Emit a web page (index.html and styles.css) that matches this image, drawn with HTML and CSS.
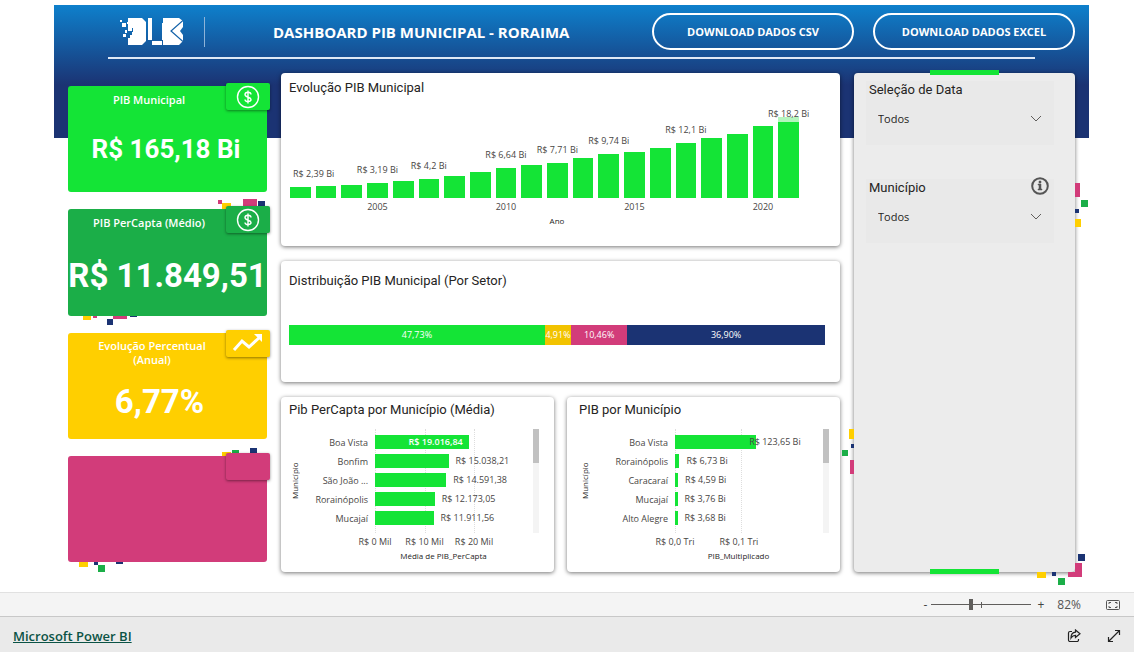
FILE: index.html
```html
<!DOCTYPE html>
<html lang="pt-BR">
<head>
<meta charset="utf-8">
<meta name="viewport" content="width=device-width, initial-scale=1">
<title>Dashboard PIB Municipal - Roraima</title>
<link rel="stylesheet" href="styles.css">
</head>
<body>
<main class="report">
  <header class="header">
    <div class="header-row">
      <svg class="logo" viewBox="0 0 63 29" role="img" aria-label="DLB">
        <g fill="#fff">
          <path d="M8 1h14l4 4v19l-4 4H8v-7h2v-3h2v-3h1v-4H8z"/>
          <path d="M28 1h4v22h-4zM32 24h10v4H32z"/>
          <path d="M43 1h16l4 3v6l-3 4 3 4v6l-4 4H43v-5h-1V6h1z"/>
          <path d="M0 3h2v2H0zM2 6h4v4H2zM8 11h4v3H8zM5 13h2v3H5zM3 17h3v3H3zM7 5h2v2H7z"/>
        </g>
        <path d="M63 3.500 51 14l12 10.500" fill="none" stroke="#1261a8" stroke-width="1.200"/>
      </svg>
      <span class="divider"></span>
      <h1 class="title">DASHBOARD PIB MUNICIPAL - RORAIMA</h1>
      <button class="download" type="button">DOWNLOAD DADOS CSV</button>
      <button class="download" type="button">DOWNLOAD DADOS EXCEL</button>
    </div>
    <hr class="rule">
  </header>

  <div class="layout">
    <section class="kpis">
      <article class="kpi kpi-lime">
        <h2 class="kpi-title">PIB Municipal</h2>
        <p class="kpi-value">R$ 165,18 Bi</p>
        <span class="tab"><svg class="coin" viewBox="0 0 24 24"><circle cx="12" cy="12" r="10.500"/><path d="M12 5.500v13M15 9.500C15 6.500 9 6.500 9 9.500S15 12 15 14.500 9 17.500 9 14.500"/></svg></span>
      </article>
      <article class="kpi kpi-green">
        <svg class="bits bits-top" width="60" height="10" viewBox="0 0 60 10"><path fill="#d23c7a" d="M11 1h4v4h-4zM36 0h14v8H36z"/><path fill="#ffcf00" d="M15 4h9v6h-9z"/><path fill="#1b3373" d="M51 2h7v6h-7z"/></svg>
        <svg class="bits bits-bottom" width="80" height="10" viewBox="0 0 80 10"><path fill="#ffcf00" d="M15 0h8v4h-8z"/><path fill="#d23c7a" d="M25 0h4v2h-4zM45 0h14v3H45z"/><path fill="#1b3373" d="M39 3h6v6h-6zM62 0h7v1h-7z"/></svg>
        <h2 class="kpi-title">PIB PerCapta (Médio)</h2>
        <p class="kpi-value kpi-large">R$ 11.849,51</p>
        <span class="tab"><svg class="coin" viewBox="0 0 24 24"><circle cx="12" cy="12" r="10.500"/><path d="M12 5.500v13M15 9.500C15 6.500 9 6.500 9 9.500S15 12 15 14.500 9 17.500 9 14.500"/></svg></span>
      </article>
      <article class="kpi kpi-yellow">
        <h2 class="kpi-title">Evolução Percentual<br>(Anual)</h2>
        <p class="kpi-value kpi-large">6,77%</p>
        <span class="tab"><svg class="trend" viewBox="0 0 32 20"><path d="M2 17 10 8l7 6L28 4" fill="none" stroke="#fff" stroke-width="3"/><path d="M22 1h8v8z" fill="#fff"/></svg></span>
      </article>
      <article class="kpi kpi-pink">
        <svg class="bits bits-top" width="60" height="10" viewBox="0 0 60 10"><path fill="#ffcf00" d="M15 6h9v4h-9z"/><path fill="#1bae48" d="M25 4h7v4h-7z"/><path fill="#1b3373" d="M43 2h7v6h-7z"/></svg>
        <svg class="bits bits-bottom" width="80" height="10" viewBox="0 0 80 10"><path fill="#ffcf00" d="M11 0h9v5h-9z"/><path fill="#1bae48" d="M30 3h7v7h-7z"/><path fill="#1b3373" d="M26 0h4v3h-4zM48 0h7v2h-7z"/></svg>
        <span class="tab"></span>
      </article>
    </section>

    <section class="charts">
      <article class="card">
        <h2 class="card-title">Evolução PIB Municipal</h2>
        <div class="columns">
          <div class="col col-first"><span class="col-label">R$ 2,39 Bi</span><i class="col-bar" style="height:11px"></i></div>
          <div class="col"><i class="col-bar" style="height:12px"></i></div>
          <div class="col"><i class="col-bar" style="height:13px"></i></div>
          <div class="col"><span class="col-label">R$ 3,19 Bi</span><i class="col-bar" style="height:15px"></i></div>
          <div class="col"><i class="col-bar" style="height:17px"></i></div>
          <div class="col"><span class="col-label">R$ 4,2 Bi</span><i class="col-bar" style="height:19px"></i></div>
          <div class="col"><i class="col-bar" style="height:22px"></i></div>
          <div class="col"><i class="col-bar" style="height:26px"></i></div>
          <div class="col"><span class="col-label">R$ 6,64 Bi</span><i class="col-bar" style="height:30px"></i></div>
          <div class="col"><i class="col-bar" style="height:33px"></i></div>
          <div class="col"><span class="col-label">R$ 7,71 Bi</span><i class="col-bar" style="height:35px"></i></div>
          <div class="col"><i class="col-bar" style="height:40px"></i></div>
          <div class="col"><span class="col-label">R$ 9,74 Bi</span><i class="col-bar" style="height:44px"></i></div>
          <div class="col"><i class="col-bar" style="height:46px"></i></div>
          <div class="col"><i class="col-bar" style="height:50px"></i></div>
          <div class="col"><span class="col-label">R$ 12,1 Bi</span><i class="col-bar" style="height:55px"></i></div>
          <div class="col"><i class="col-bar" style="height:60px"></i></div>
          <div class="col"><i class="col-bar" style="height:64px"></i></div>
          <div class="col"><i class="col-bar" style="height:72px"></i></div>
          <div class="col col-last"><span class="col-label">R$ 18,2 Bi</span><i class="col-bar" style="height:81px"></i></div>
        </div>
        <div class="years">
          <span class="year y2005">2005</span><span class="year y2010">2010</span><span class="year y2015">2015</span><span class="year y2020">2020</span>
        </div>
        <p class="axis-title year-title">Ano</p>
      </article>

      <article class="card card-sectors">
        <h2 class="card-title">Distribuição PIB Municipal (Por Setor)</h2>
        <div class="stack">
          <span class="seg seg-lime" style="width:47.73%">47,73%</span>
          <span class="seg seg-yellow" style="width:4.91%">4,91%</span>
          <span class="seg seg-pink" style="width:10.46%">10,46%</span>
          <span class="seg seg-navy" style="width:36.9%">36,90%</span>
        </div>
      </article>

      <div class="pair">
        <article class="card">
          <h2 class="card-title">Pib PerCapta por Município (Média)</h2>
          <div class="hchart">
            <span class="side-title">Município</span>
            <div class="rows">
              <div class="gridlines"><i style="left:0%"></i><i style="left:33%"></i><i style="left:66%"></i></div>
              <span class="name">Boa Vista</span><div class="track"><b class="bar bar-in" style="width:62.5%">R$ 19.016,84</b></div>
              <span class="name">Bonfim</span><div class="track"><b class="bar" style="width:49%"></b><span class="value">R$ 15.038,21</span></div>
              <span class="name">São João ...</span><div class="track"><b class="bar" style="width:47.5%"></b><span class="value">R$ 14.591,38</span></div>
              <span class="name">Rorainópolis</span><div class="track"><b class="bar" style="width:39.8%"></b><span class="value">R$ 12.173,05</span></div>
              <span class="name">Mucajaí</span><div class="track"><b class="bar" style="width:39%"></b><span class="value">R$ 11.911,56</span></div>
            </div>
            <span class="scroll"></span>
          </div>
          <div class="ticks"><span style="left:0%">R$ 0 Mil</span><span style="left:33%">R$ 10 Mil</span><span style="left:66%">R$ 20 Mil</span></div>
          <p class="axis-title bar-title">Média de PIB_PerCapta</p>
        </article>

        <article class="card card-total">
          <h2 class="card-title">PIB por Município</h2>
          <div class="hchart">
            <span class="side-title">Município</span>
            <div class="rows">
              <div class="gridlines"><i style="left:0%"></i><i style="left:47%"></i></div>
              <span class="name">Boa Vista</span><div class="track"><b class="bar" style="width:58%"></b><span class="value value-over">R$ 123,65 Bi</span></div>
              <span class="name">Rorainópolis</span><div class="track"><b class="bar" style="width:3.2%"></b><span class="value">R$ 6,73 Bi</span></div>
              <span class="name">Caracaraí</span><div class="track"><b class="bar" style="width:2.2%"></b><span class="value">R$ 4,59 Bi</span></div>
              <span class="name">Mucajaí</span><div class="track"><b class="bar" style="width:1.8%"></b><span class="value">R$ 3,76 Bi</span></div>
              <span class="name">Alto Alegre</span><div class="track"><b class="bar" style="width:1.8%"></b><span class="value">R$ 3,68 Bi</span></div>
            </div>
            <span class="scroll"></span>
          </div>
          <div class="ticks"><span style="left:0%">R$ 0,0 Tri</span><span style="left:47%">R$ 0,1 Tri</span></div>
          <p class="axis-title bar-title">PIB_Multiplicado</p>
        </article>
      </div>
    </section>

    <aside class="filters">
      <svg class="bits bits-right" width="16" height="48" viewBox="0 0 16 48"><path fill="#d23c7a" d="M0 0h5v14H0z"/><path fill="#1bae48" d="M6 17h7v7H6z"/><path fill="#1b3373" d="M0 26h4v4H0z"/><path fill="#ffcf00" d="M0 36h6v8H0z"/></svg>
      <svg class="bits bits-left" width="12" height="46" viewBox="0 0 12 46"><path fill="#ffcf00" d="M7 0h5v10H7z"/><path fill="#1b3373" d="M9 15h3v4H9z"/><path fill="#1bae48" d="M0 21h6v6H0z"/><path fill="#d23c7a" d="M8 31h4v14H8z"/></svg>
      <svg class="bits bits-corner" width="48" height="31" viewBox="0 0 48 31"><path fill="#1b3373" d="M41 0h7v7h-7zM15 18h4v4h-4z"/><path fill="#d23c7a" d="M38 9h7v14H31v-5h7z"/><path fill="#ffcf00" d="M0 18h9v6H0z"/><path fill="#1bae48" d="M21 24h7v7h-7z"/></svg>
      <div class="filter">
        <label class="filter-title" for="data">Seleção de Data</label>
        <div class="picker"><select id="data"><option>Todos</option></select><svg class="chevron" viewBox="0 0 12 8"><path d="m1 1 5 5 5-5"/></svg></div>
      </div>
      <div class="filter">
        <div class="filter-head">
          <label class="filter-title" for="municipio">Município</label>
          <button class="info" type="button" aria-label="Informações"><svg viewBox="0 0 18 18"><circle cx="9" cy="9" r="7.800" fill="none" stroke="#555" stroke-width="2"/><path d="M8 4h2v2H8zM7 7h3v5h1v1H7v-1h1V8H7z" fill="#555" stroke="#555" stroke-width=".5"/></svg></button>
        </div>
        <div class="picker"><select id="municipio"><option>Todos</option></select><svg class="chevron" viewBox="0 0 12 8"><path d="m1 1 5 5 5-5"/></svg></div>
      </div>
    </aside>
  </div>
</main>

<div class="zoombar">
  <button class="tool" type="button" aria-label="Reduzir">-</button>
  <div class="zoom"><input class="slider" type="range" min="0" max="100" value="39" aria-label="Zoom"></div>
  <button class="tool" type="button" aria-label="Ampliar">+</button>
  <span class="percent">82%</span>
  <button class="tool" type="button" aria-label="Ajustar à página"><svg width="15" height="12" viewBox="0 0 15 12" fill="none" stroke="#555"><rect x=".5" y="1.500" width="13" height="9" rx="1"/><path d="M3 5V3.500h2M9 3.500h2V5M11 7v1.500H9M5 8.500H3V7"/></svg></button>
</div>
<footer class="footer">
  <a class="brand" href="#">Microsoft Power BI</a>
  <button class="tool" type="button" aria-label="Compartilhar"><svg width="14" height="14" viewBox="0 0 14 14" fill="none" stroke="#222" stroke-width="1.200"><path d="M5 2.500H3A1.500 1.500 0 0 0 1.500 4v7A1.500 1.500 0 0 0 3 12.500h7a1.500 1.500 0 0 0 1.500-1.500v-1"/><path d="M8.500 1v2.200C5.500 3.500 4 5.500 4 9c1.200-2 2.500-2.700 4.500-2.700v2.200L13 4.800z"/></svg></button>
  <button class="tool" type="button" aria-label="Tela cheia"><svg width="14" height="14" viewBox="0 0 14 14" fill="none" stroke="#222" stroke-width="1.200"><path d="M1.500 12.500l11-11M8 1.500h4.500V6M1.500 8v4.500H6"/></svg></button>
</footer>
</body>
</html>
```
FILE: styles.css
```css
* { box-sizing: border-box; }

body {
  margin: 0;
  min-height: 100vh;
  display: flex;
  flex-direction: column;
  background: #fff;
  color: #252423;
  font-family: "Open Sans", "Noto Sans", sans-serif;
}

h1, h2, p { margin: 0; }
button { font: inherit; cursor: pointer; }

.report {
  flex: 1;
  display: flex;
  flex-direction: column;
  margin: 5px 45px 0 54px;
  background: linear-gradient(#0e80cc 0, #1b3373 80px, #1b3373 133px, transparent 133px);
}

/* Header */
.header { height: 68px; padding-top: 8px; }
.header-row {
  display: flex;
  align-items: center;
  height: 37px;
  padding: 0 14px 0 66px;
}
.logo { width: 63px; height: 29px; }
.divider { width: 1px; height: 30px; margin: 0 68px 0 21px; background: #8db3d8; }
.title { flex: 1; color: #fff; font-size: 15px; line-height: 20px; font-weight: 700; white-space: nowrap; }
.download {
  width: 202px;
  height: 37px;
  margin-left: 19px;
  border: 2px solid #fff;
  border-radius: 19px;
  background: transparent;
  color: #fff;
  font-size: 11px;
  font-weight: 700;
  white-space: nowrap;
}
.rule { margin: 7px 54px 0; border: 0; height: 2px; background: #dfe8f5; }

.layout {
  flex: 1;
  display: grid;
  grid-template-columns: 199px minmax(0, 1fr) 221px;
  gap: 14px;
  padding: 0 14px 20px;
}

/* KPI cards */
.kpis { display: flex; flex-direction: column; gap: 17px; padding: 13px 0 10px; }
.kpi {
  position: relative;
  flex: 1;
  display: flex;
  flex-direction: column;
  border-radius: 3px;
  color: #fff;
  text-align: center;
}
.kpi-lime, .kpi-lime .tab { background: #14e436; }
.kpi-green, .kpi-green .tab { background: #1bae48; }
.kpi-yellow, .kpi-yellow .tab { background: #ffcf00; }
.kpi-pink, .kpi-pink .tab { background: #d23c7a; }
.kpi-title { padding: 7px 37px 0 0; font-size: 11px; line-height: 14px; font-weight: 600; }
.kpi-yellow .kpi-title { padding: 6px 31px 0 0; }
.kpi-value {
  padding: 20px 3px 0 0;
  font-family: Roboto, sans-serif;
  font-size: 26px;
  line-height: 44px;
  font-weight: 700;
  white-space: nowrap;
}
.kpi-large { padding: 24px 0 0; font-size: 33px; }
.kpi-yellow .kpi-value { padding: 13px 16px 0 0; }
.tab {
  position: absolute;
  top: -3px;
  right: -3px;
  width: 44px;
  height: 27px;
  display: grid;
  place-items: center;
  border-radius: 2px;
  box-shadow: 0 1px 3px rgba(0, 0, 0, .45);
}
.coin { width: 24px; height: 24px; fill: none; stroke: #fff; stroke-width: 1.4; }
.trend { width: 32px; height: 20px; }

/* Confetti around the panels */
.bits { position: absolute; }
.bits-top { right: 0; bottom: 100%; }
.bits-bottom { left: 0; top: 100%; }
.bits-right { left: 100%; top: 110px; }
.bits-left { right: 100%; top: 356px; }
.bits-corner { right: -10px; bottom: -13px; }

/* Chart cards */
.charts { display: grid; grid-template-rows: 173fr 122fr 175fr; gap: 15px; }
.pair { display: grid; grid-template-columns: repeat(2, minmax(0, 1fr)); gap: 13px; }
.card {
  min-width: 0;
  padding: 7px 8px 0;
  border-radius: 4px;
  background: #fff;
  box-shadow: 0 1px 4px rgba(0, 0, 0, .55);
}
.card-title { font-family: Roboto, sans-serif; font-size: 13px; line-height: 16px; font-weight: 400; white-space: nowrap; }
.card-sectors { padding-top: 12px; }
.pair .card { padding-top: 5px; }
.axis-title { font-size: 8px; line-height: 12px; font-weight: 400; color: #252423; text-align: center; }

.columns {
  display: grid;
  grid-template-columns: repeat(20, 1fr);
  gap: 5px;
  height: 102px;
  padding: 0 33px 0 1px;
}
.col { display: flex; flex-direction: column; justify-content: flex-end; align-items: center; min-width: 0; }
.col-label { font-size: 9px; line-height: 12px; margin-bottom: 7px; color: #484644; white-space: nowrap; }
.col-bar { width: 100%; flex: none; background: #14e436; }
.col-first { align-items: flex-start; }
.col-first .col-label { padding-left: 3px; }
.col-last .col-label { z-index: 1; margin-bottom: -3px; }
.col-last .col-bar { border-top: 5px solid #b5f5be; }
.years {
  display: grid;
  grid-template-columns: repeat(20, 1fr);
  gap: 5px;
  padding: 2px 33px 0 1px;
  color: #484644;
  font-size: 9px;
  line-height: 14px;
}
.year { display: flex; justify-content: center; min-width: 0; }
.y2005 { grid-column: 4; }
.y2010 { grid-column: 9; }
.y2015 { grid-column: 14; }
.y2020 { grid-column: 19; }
.year-title { padding: 1px 7px 0 0; }

.stack { display: flex; height: 20px; margin: 36px 7px 0 0; }
.seg { overflow: hidden; color: #fff; font-size: 9px; line-height: 20px; font-weight: 400; text-align: center; }
.seg-lime { background: #14e436; }
.seg-yellow { background: #f2c300; }
.seg-pink { background: #d23c7a; }
.seg-navy { background: #1b3373; }

.hchart { display: flex; height: 104px; margin-top: 11px; padding-right: 7px; }
.side-title {
  width: 12px;
  writing-mode: vertical-rl;
  transform: rotate(180deg);
  font-size: 8px;
  line-height: 12px;
  font-weight: 400;
  color: #252423;
  text-align: center;
}
.rows {
  position: relative;
  flex: 1;
  display: grid;
  grid-template-columns: 67px minmax(0, 1fr);
  grid-auto-rows: 14px;
  align-content: start;
  row-gap: 5px;
  column-gap: 7px;
  padding: 6px 8px 0 0;
}
.gridlines { position: absolute; top: 0; bottom: 0; left: 74px; right: 8px; }
.gridlines i { position: absolute; top: 0; bottom: 0; border-left: 1px dotted #ddd; }
.name { font-size: 9px; line-height: 15px; color: #484644; text-align: right; white-space: nowrap; }
.track { position: relative; display: flex; align-items: center; }
.bar { flex: none; height: 14px; background: #14e436; }
.bar-in { padding-right: 6px; color: #fff; font-size: 9px; line-height: 14px; font-weight: 600; text-align: right; }
.value { margin-left: 7px; font-size: 9px; line-height: 14px; color: #484644; white-space: nowrap; }
.value-over { margin-left: -7px; }
.scroll { width: 6px; background: linear-gradient(#c1c1c1 34px, #f4f4f4 34px); }
.ticks { position: relative; height: 15px; margin: 2px 21px 0 86px; color: #484644; font-size: 9px; line-height: 14px; }
.ticks span { position: absolute; transform: translateX(-50%); white-space: nowrap; }
.bar-title { padding-left: 52px; }
.card-total { padding-left: 12px; }
.card-total .rows { grid-template-columns: 77px minmax(0, 1fr); }
.card-total .hchart { padding-right: 3px; }
.card-total .gridlines { left: 84px; }
.card-total .ticks { margin-left: 96px; }
.card-total .bar-title { padding-left: 66px; }

/* Filter panel */
.filters {
  position: relative;
  display: flex;
  flex-direction: column;
  gap: 34px;
  padding: 8px 21px 0 12px;
  border-radius: 4px;
  background: #ececec;
  box-shadow: 0 1px 4px rgba(0, 0, 0, .55);
}
.filters::before, .filters::after {
  content: "";
  position: absolute;
  left: 76px;
  width: 69px;
  height: 5px;
  background: #14e436;
}
.filters::before { top: -3px; }
.filters::after { bottom: -2px; }
.filter { height: 64px; background: #e9e9e9; }
.filter-head { display: flex; justify-content: space-between; height: 17px; }
.filter-title { display: block; padding-left: 3px; font-family: Roboto, sans-serif; font-size: 13px; line-height: 17px; }
.info { width: 18px; height: 18px; margin: -2px 5px 0 0; padding: 0; border: 0; background: none; }
.info svg { display: block; }
.picker { position: relative; padding-top: 10px; }
.picker select {
  display: block;
  width: 100%;
  height: 22px;
  padding: 0 12px;
  appearance: none;
  border: 0;
  background: transparent;
  color: #252423;
  font: 11px/22px "Open Sans", "Noto Sans", sans-serif;
}
.chevron { position: absolute; right: 12px; top: 17px; width: 12px; height: 8px; fill: none; stroke: #605e5c; pointer-events: none; }

/* Viewer bars */
.zoombar, .footer { display: flex; align-items: center; justify-content: flex-end; }
.zoombar { height: 24px; padding-right: 13px; border-top: 1px solid #e1e1e1; background: #f4f4f4; color: #555; font-size: 12px; }
.tool { display: grid; place-items: center; padding: 0; border: 0; background: none; color: #444; line-height: 16px; }
.zoom { position: relative; display: flex; width: 100px; margin: 0 6px 0 4px; }
.zoom::after { content: ""; position: absolute; left: 50px; top: 5px; width: 1px; height: 6px; background: #605e5c; }
.slider { width: 100px; height: 16px; margin: 0; appearance: none; background: linear-gradient(#605e5c, #605e5c) center / 100% 1px no-repeat; }
.slider::-webkit-slider-thumb { appearance: none; width: 4px; height: 11px; background: #605e5c; }
.percent { margin: 0 25px 0 13px; font-size: 12px; }
.footer { height: 36px; gap: 26px; padding: 3px 13px 0; border-top: 1px solid #c8c8c8; background: #eaeaea; }
.brand { margin-right: auto; color: #0b5345; font-size: 13px; font-weight: 600; }
```
